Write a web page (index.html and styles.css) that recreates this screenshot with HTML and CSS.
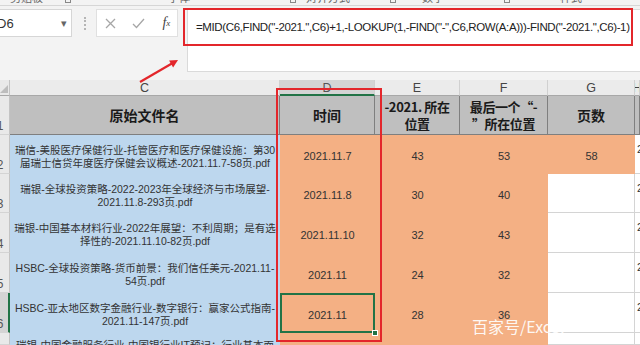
FILE: index.html
```html
<!DOCTYPE html>
<html lang="zh-CN">
<head>
<meta charset="utf-8">
<title>Excel</title>
<link rel="stylesheet" href="styles.css">
</head>
<body>
<div class="ribbon">
  <span class="rb rb1">剪贴板</span><span class="rbi rbi1"></span>
  <span class="rb rb2">字体</span><span class="rbi rbi2"></span>
  <span class="rb rb3">对齐方式</span><span class="rbi rbi3"></span>
  <span class="rb rb4">数字</span><span class="rbi rbi4"></span>
  <span class="rb rb5">样式</span>
</div>
<div class="fbar">
  <div class="namebox"><span>D6</span><span class="dd">&#9662;</span></div>
  <div class="grip"></div>
  <div class="fxbox">
    <span class="fbtn"><svg width="11" height="11" viewBox="0 0 11 11"><path d="M1 1L10 10M10 1L1 10" stroke="#a6a6a6" stroke-width="1.3" fill="none"/></svg></span>
    <span class="fbtn"><svg width="13" height="11" viewBox="0 0 13 11"><path d="M1 6L4.5 9.5L12 1" stroke="#a6a6a6" stroke-width="1.3" fill="none"/></svg></span>
    <span class="fbtn fx"><i>f</i><sub>x</sub></span>
  </div>
  <div class="formula">=MID(C6,FIND("-2021.",C6)+1,-LOOKUP(1,-FIND("-",C6,ROW(A:A)))-FIND("-2021.",C6)-1)</div>
  <div class="redbox"></div>
  <svg class="arrow" width="55" height="32" viewBox="0 0 55 32"><path d="M10 26L44 6.3" stroke="#e3262b" stroke-width="2.2" fill="none"/><polygon points="48,4 43.1,11.5 39.1,4.5" fill="#e3262b"/></svg>
</div>
<div class="sheet">
  <div class="c corner"><span class="tri"></span></div>
  <div class="c ch">C</div>
  <div class="c ch sel">D</div>
  <div class="c ch">E</div>
  <div class="c ch">F</div>
  <div class="c ch">G</div>
  <div class="c ch">H</div>

  <div class="c rh"><span>1</span></div>
  <div class="c hd">原始文件名</div>
  <div class="c hd">时间</div>
  <div class="c hd hd2">-2021. 所在<br>位置</div>
  <div class="c hd hd2">最后一个“-<br>”所在位置</div>
  <div class="c hd">页数</div>
  <div class="c hd"></div>

  <div class="c rh"><span>2</span></div>
  <div class="c blue">瑞信-美股医疗保健行业-托管医疗和医疗保健设施：第30<br>届瑞士信贷年度医疗保健会议概述-2021.11.7-58页.pdf</div>
  <div class="c or">2021.11.7</div>
  <div class="c or">43</div>
  <div class="c or">53</div>
  <div class="c or">58</div>
  <div class="c hc">2021</div>

  <div class="c rh"><span>3</span></div>
  <div class="c blue">瑞银-全球投资策略-2022-2023年全球经济与市场展望-<br>2021.11.8-293页.pdf</div>
  <div class="c or">2021.11.8</div>
  <div class="c or">30</div>
  <div class="c or">40</div>
  <div class="c wh"></div>
  <div class="c hc">2021</div>

  <div class="c rh"><span>4</span></div>
  <div class="c blue">瑞银-中国基本材料行业-2022年展望：不利周期；是有选<br>择性的-2021.11.10-82页.pdf</div>
  <div class="c or">2021.11.10</div>
  <div class="c or">32</div>
  <div class="c or">43</div>
  <div class="c wh"></div>
  <div class="c hc">2021</div>

  <div class="c rh"><span>5</span></div>
  <div class="c blue">HSBC-全球投资策略-货币前景：我们信任美元-2021.11-<br>54页.pdf</div>
  <div class="c or">2021.11</div>
  <div class="c or">24</div>
  <div class="c or">32</div>
  <div class="c wh"></div>
  <div class="c hc">2021</div>

  <div class="c rh rsel"><span>6</span></div>
  <div class="c blue">HSBC-亚太地区数字金融行业-数字银行：赢家公式指南-<br>2021.11-147页.pdf</div>
  <div class="c or active">2021.11<span class="handle"></span></div>
  <div class="c or">28</div>
  <div class="c or">36</div>
  <div class="c wh"></div>
  <div class="c hc">2021</div>

  <div class="c rh"><span></span></div>
  <div class="c blue part">瑞银-中国金融服务行业-中国银行业IT预记：行业基本面</div>
  <div class="c or"></div>
  <div class="c or"></div>
  <div class="c or"></div>
  <div class="c wh"></div>
  <div class="c hc"></div>

  <div class="redcol"></div>
  <div class="wm">百家号/Excel</div>
</div>
</body>
</html>
```
FILE: styles.css
```css
html, body {
  margin: 0;
  padding: 0;
}
body {
  width: 640px;
  height: 345px;
  overflow: hidden;
  background: #f3f3f3;
  font-family: "Liberation Sans", "Noto Sans CJK SC", sans-serif;
  color: #333;
}

/* ribbon remnant */
.ribbon {
  height: 5px;
  border-bottom: 1px solid #d6d6d6;
  overflow: hidden;
  display: flex;
  align-items: flex-start;
}
.rb {
  font-size: 11px;
  line-height: 11px;
  margin-top: -8px;
  color: #666;
  white-space: nowrap;
  font-family: "Noto Sans CJK SC", sans-serif;
}
.rbi {
  width: 6px;
  height: 6px;
  margin-top: -3px;
  border: 1px solid #888;
  box-sizing: border-box;
}
.rb1 { margin-left: 10px; }
.rbi1 { margin-left: 22px; }
.rb2 { margin-left: 97px; }
.rbi2 { margin-left: 100px; }
.rb3 { margin-left: 10px; }
.rbi3 { margin-left: 40px; }
.rb4 { margin-left: 26px; }
.rbi4 { margin-left: 60px; }
.rb5 { margin-left: 50px; }

/* formula bar */
.fbar {
  height: 74px;
  box-sizing: border-box;
  padding-top: 3px;
  display: flex;
  align-items: flex-start;
  position: relative;
  z-index: 5;
}
.namebox {
  margin-left: -10px;
  width: 82px;
  height: 28px;
  box-sizing: border-box;
  background: #fff;
  border: 1px solid #d6d6d6;
  display: flex;
  align-items: center;
  justify-content: space-between;
  padding: 0 4px 0 6px;
  font-size: 13px;
  color: #333;
}
.dd {
  font-size: 11px;
  color: #666;
}
.grip {
  margin-left: 12px;
  margin-top: 8px;
  width: 2px;
  height: 13px;
  border-left: 2px dotted #b5b5b5;
  box-sizing: border-box;
}
.fxbox {
  margin-left: 10px;
  width: 82px;
  height: 28px;
  box-sizing: border-box;
  background: #fff;
  border: 1px solid #e0e0e0;
  display: flex;
  align-items: center;
}
.fbtn {
  width: 29px;
  display: flex;
  justify-content: center;
  align-items: center;
}
.fx {
  width: 22px;
  font-family: "Liberation Serif", serif;
  font-size: 14px;
  color: #444;
  padding-left: 3px;
}
.fx sub {
  font-size: 9px;
  font-style: italic;
  vertical-align: -2px;
}
.formula {
  margin-left: 9px;
  flex: 1;
  height: 63px;
  box-sizing: border-box;
  background: #fff;
  border: 1px solid #dadada;
  border-right: none;
  padding: 10px 0 0 8px;
  font-size: 11.5px;
  letter-spacing: -0.38px;
  line-height: 14px;
  color: #222;
  white-space: nowrap;
  overflow: hidden;
}
.redbox {
  position: absolute;
  left: 183px;
  top: 2px;
  width: 450px;
  height: 38px;
  box-sizing: border-box;
  border: 2px solid #e3262b;
}
.arrow {
  position: absolute;
  left: 130px;
  top: 50px;
  overflow: visible;
}

/* sheet */
.sheet {
  display: grid;
  grid-template-columns: 10px 270px 95px 85px 88px 87px 5px;
  grid-template-rows: 16px 39px 39px 39px 40px 40px 40px 12px;
  position: relative;
  background: #fff;
}
.c {
  box-sizing: border-box;
  overflow: hidden;
  display: flex;
  align-items: center;
  justify-content: center;
  text-align: center;
  white-space: nowrap;
}
.corner {
  background: #e9e9e9;
  border-right: 1px solid #c4c4c4;
  border-bottom: 1px solid #a8a8a8;
  justify-content: flex-end;
  align-items: flex-end;
  padding: 0 1px 2px 0;
}
.tri {
  width: 0;
  height: 0;
  border-left: 8px solid transparent;
  border-bottom: 8px solid #bdbdbd;
}
.ch {
  background: #ebebeb;
  border-right: 1px solid #d0d0d0;
  border-bottom: 1px solid #a8a8a8;
  font-size: 12.5px;
  color: #444;
  padding-top: 1px;
}
.ch.sel {
  background: #d4d4d4;
  border-bottom: 2px solid #217346;
  color: #555;
}
.rh {
  background: #e9e9e9;
  border-right: 1px solid #c4c4c4;
  border-bottom: 1px solid #d4d4d4;
  justify-content: flex-start;
  align-items: flex-end;
  font-size: 12px;
  color: #555;
}
.rh span {
  display: block;
  flex: none;
  width: 26px;
  margin-left: -13px;
  margin-bottom: 1px;
  text-align: center;
}
.rh.rsel {
  background: #d4d4d4;
  border-right: 2px solid #217346;
}
.hd {
  background: #bfbfbf;
  border-right: 1px solid #7f7f7f;
  border-bottom: 1px solid #7f7f7f;
  font-family: "Noto Sans CJK SC", sans-serif;
  font-weight: 700;
  font-size: 14px;
  line-height: 17px;
  color: #1a1a1a;
}
.hd2 {
  font-size: 13px;
  letter-spacing: -0.4px;
}
.blue {
  background: #bdd7ee;
  font-size: 10.5px;
  line-height: 13px;
  color: #333;
  padding-top: 4px;
}
.blue.part {
  align-items: flex-start;
  padding-top: 6px;
}
.or {
  background: #f4b084;
  font-size: 11px;
  line-height: 13px;
  color: #333;
  padding-top: 4px;
}
.wh {
  background: #fff;
  border-right: 1px solid #d4d4d4;
  border-bottom: 1px solid #d4d4d4;
}
.hc {
  background: #fff;
  border-bottom: 1px solid #d4d4d4;
  justify-content: flex-start;
  align-items: flex-start;
  font-size: 11px;
  line-height: 13px;
  padding: 8px 0 0 2px;
}
.active {
  position: relative;
  overflow: visible;
  box-shadow: inset 0 0 0 2px #217346;
  z-index: 2;
}
.handle {
  position: absolute;
  right: -3px;
  bottom: -3px;
  width: 6px;
  height: 6px;
  box-sizing: border-box;
  background: #217346;
  border: 1px solid #fff;
}
.redcol {
  position: absolute;
  left: 276px;
  top: 8px;
  width: 106px;
  height: 254px;
  box-sizing: border-box;
  border: 2px solid #e3262b;
  z-index: 3;
}
.wm {
  position: absolute;
  left: 472px;
  top: 237px;
  font-family: "Noto Sans CJK SC", sans-serif;
  font-size: 16px;
  line-height: 18px;
  color: rgba(255, 255, 255, 0.92);
  white-space: nowrap;
  z-index: 4;
}
```
